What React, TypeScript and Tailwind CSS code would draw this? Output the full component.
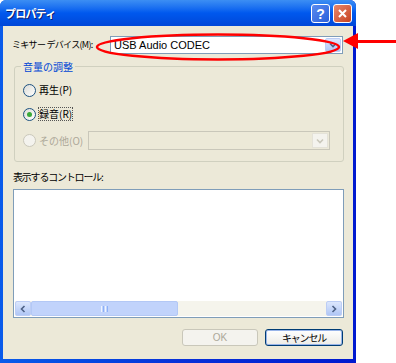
import { ReactNode } from "react";

const jp = { fontFamily: '"Noto Sans CJK JP", "Noto Sans", sans-serif' };

function ComboArrow({ disabled }: { disabled?: boolean }) {
  return (
    <div
      className={
        disabled
          ? "w-[16px] h-full flex items-center justify-center bg-[#F4F3EE] border border-[#E4E2D8]"
          : "w-[16px] h-full flex items-center justify-center rounded-[2px] bg-gradient-to-b from-[#DCE7FD] to-[#B0C6F5] border border-[#BCCDF5]"
      }
    >
      <svg width="8" height="6" viewBox="0 0 8 6">
        <path
          d="M1 1.5 L4 4.5 L7 1.5"
          fill="none"
          stroke={disabled ? "#C9C7BA" : "#4D6185"}
          strokeWidth="1.6"
        />
      </svg>
    </div>
  );
}

function Radio({
  checked,
  disabled,
  children,
}: {
  checked?: boolean;
  disabled?: boolean;
  children: ReactNode;
}) {
  return (
    <div className="flex items-center h-[14px]">
      <div
        className={
          disabled
            ? "w-[13px] h-[13px] rounded-full border border-[#CAC8BB] bg-[#F4F3EE] flex items-center justify-center"
            : "w-[13px] h-[13px] rounded-full border border-[#1C5180] bg-gradient-to-br from-[#DCDCD6] to-white flex items-center justify-center"
        }
      >
        {checked && (
          <div className="w-[5px] h-[5px] rounded-full bg-[#3AA93A]" />
        )}
      </div>
      <span
        className={
          disabled
            ? "ml-[3px] text-[10px] leading-[12px] text-[#ACA899] whitespace-nowrap"
            : checked
            ? "ml-[3px] text-[10px] leading-[12px] text-black whitespace-nowrap outline outline-1 outline-dotted outline-[#555]"
            : "ml-[3px] text-[10px] leading-[12px] text-black whitespace-nowrap"
        }
        style={jp}
      >
        {children}
      </span>
    </div>
  );
}

export default function App() {
  return (
    <div className="relative w-[396px] h-[363px] bg-white overflow-hidden">
      <div className="w-[356px] h-[363px] flex flex-col bg-gradient-to-r from-[#0A5BEA] via-[#0831D9] to-[#0019CF] rounded-t-[6px]">
        {/* title bar */}
        <div className="h-[26px] flex items-center justify-between pl-[5px] pr-[4px] rounded-t-[6px] bg-gradient-to-b from-[#3C8EF3] via-[#0058EE] to-[#0047D8]">
          <span
            className="text-white font-bold text-[11px] tracking-[-0.8px]"
            style={{ ...jp, textShadow: "1px 1px 0 #0A1E6E" }}
          >
            プロパティ
          </span>
          <div className="flex gap-[3px] mt-[1px]">
            <div
              className="w-[19px] h-[19px] rounded-[3px] border border-white bg-gradient-to-br from-[#5A8CF0] to-[#2B5FDA] flex items-center justify-center text-white font-bold text-[14px] leading-none"
              style={{ fontFamily: '"Liberation Sans", sans-serif' }}
            >
              ?
            </div>
            <div className="w-[19px] h-[19px] rounded-[3px] border border-white bg-gradient-to-br from-[#E8866A] to-[#C6401D] flex items-center justify-center">
              <svg width="11" height="11" viewBox="0 0 11 11">
                <path d="M2 2 L9 9 M9 2 L2 9" stroke="white" strokeWidth="2" />
              </svg>
            </div>
          </div>
        </div>

        {/* client area */}
        <div className="flex-1 mx-[3px] mb-[4px] bg-[#ECE9D8] flex flex-col">
          <div className="flex items-center mt-[10px] h-[18px]">
            <span
              className="ml-[9px] text-[9px] text-black w-[98px] shrink-0 whitespace-pre tracking-[-0.7px]"
              style={jp}
            >
              ミキサー デバイス(M):
            </span>
            <div className="w-[233px] h-[18px] shrink-0 bg-white border border-[#7F9DB9] flex items-center justify-between p-[1px]">
              <span
                className="ml-[2px] text-[11px] text-black"
                style={{ fontFamily: '"Liberation Sans", sans-serif' }}
              >
                USB Audio CODEC
              </span>
              <ComboArrow />
            </div>
          </div>

          <fieldset className="ml-[11px] mt-[5px] w-[330px] h-[103px] border border-[#D0D0BF] rounded-[3px] px-[8px]">
            <legend className="ml-[-2px] px-[2px] text-[10px] text-[#0046D5]" style={jp}>
              音量の調整
            </legend>
            <div className="flex flex-col gap-[10px] mt-[9px]">
              <Radio>再生(P)</Radio>
              <Radio checked>録音(R)</Radio>
              <div className="flex items-center">
                <div className="w-[65px]">
                  <Radio disabled>その他(O)</Radio>
                </div>
                <div className="w-[242px] h-[19px] border border-[#C9C7BA] bg-[#ECE9D8] flex justify-end p-[1px]">
                  <ComboArrow disabled />
                </div>
              </div>
            </div>
          </fieldset>

          <span
            className="ml-[10px] mt-[8px] text-[10px] text-black leading-[14px] tracking-[-1.2px]"
            style={jp}
          >
            表示するコントロール:
          </span>

          <div className="ml-[10px] mt-[5px] w-[331px] h-[129px] bg-white border border-[#7F9DB9] flex flex-col justify-end p-[1px]">
            <div className="h-[15px] flex bg-[#F5F4EC]">
              <div className="w-[16px] h-[15px] rounded-[2px] bg-gradient-to-b from-[#DCE7FD] to-[#B0C6F5] border border-[#BCCDF5] flex items-center justify-center">
                <svg width="6" height="8" viewBox="0 0 6 8">
                  <path d="M4.5 1 L1.5 4 L4.5 7" fill="none" stroke="#4D6185" strokeWidth="1.6" />
                </svg>
              </div>
              <div className="w-[147px] h-[15px] rounded-[2px] bg-[#C1D3FB] border border-[#B3C8F5] flex items-center justify-center gap-[1px]">
                <div className="w-[1px] h-[6px] bg-[#EEF4FE]" />
                <div className="w-[1px] h-[6px] bg-[#8CB0F8]" />
                <div className="w-[1px] h-[6px] bg-[#EEF4FE]" />
                <div className="w-[1px] h-[6px] bg-[#8CB0F8]" />
              </div>
              <div className="flex-1" />
              <div className="w-[16px] h-[15px] rounded-[2px] bg-gradient-to-b from-[#DCE7FD] to-[#B0C6F5] border border-[#BCCDF5] flex items-center justify-center">
                <svg width="6" height="8" viewBox="0 0 6 8">
                  <path d="M1.5 1 L4.5 4 L1.5 7" fill="none" stroke="#4D6185" strokeWidth="1.6" />
                </svg>
              </div>
            </div>
          </div>

          <div className="flex justify-end gap-[7px] mr-[10px] mt-[11px]">
            <div
              className="w-[76px] h-[17px] rounded-[3px] border border-[#C9C7BA] bg-[#F4F3EE] flex items-center justify-center text-[10px] text-[#ACA899]"
              style={{ fontFamily: '"Liberation Sans", sans-serif' }}
            >
              OK
            </div>
            <div
              className="w-[78px] h-[17px] rounded-[3px] border border-[#003C74] bg-gradient-to-b from-white to-[#ECEBE6] shadow-[inset_0_0_0_1px_#98B4E9] flex items-center justify-center text-[10px] text-black tracking-[-1.2px]"
              style={jp}
            >
              キャンセル
            </div>
          </div>
        </div>
      </div>

      {/* red annotation */}
      <svg className="absolute left-0 top-0 pointer-events-none" width="396" height="363">
        <ellipse cx="218" cy="47" rx="121" ry="12.5" fill="none" stroke="#FF0000" strokeWidth="2.5" />
        <path d="M343 41 L358 33 L358 49 Z" fill="#FF0000" />
        <rect x="356" y="40" width="40" height="3" fill="#FF0000" />
      </svg>
    </div>
  );
}
